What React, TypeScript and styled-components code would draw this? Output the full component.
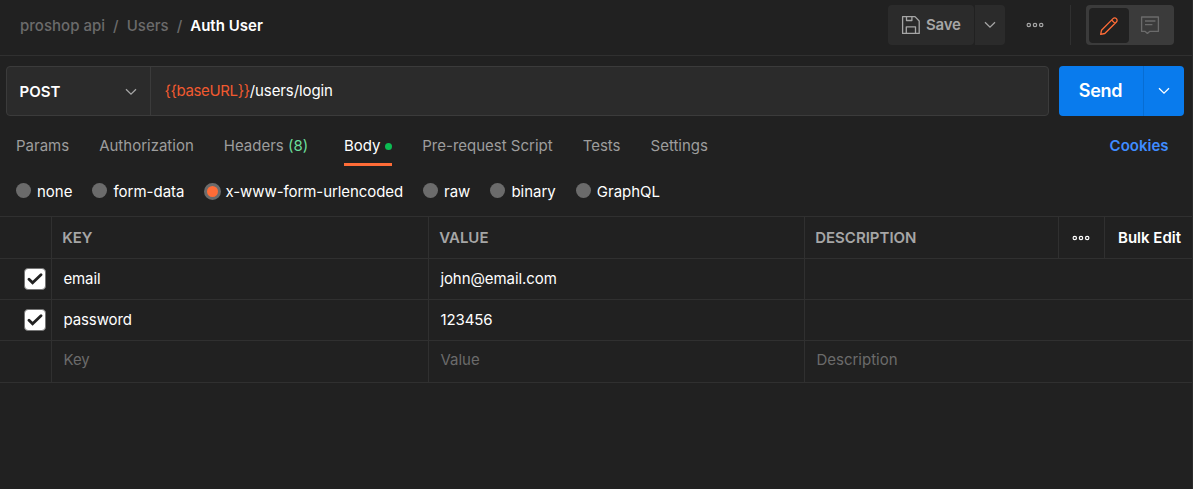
import React from "react";
import styled, { createGlobalStyle, css } from "styled-components";

const Global = createGlobalStyle`
  *, *::before, *::after { box-sizing: border-box; }
  html, body { margin: 0; background: #212121; }
  body { font: 400 15px/20px Inter, "Liberation Sans", sans-serif; color: #fff; overflow: hidden; }
  button { font: inherit; color: inherit; border: 0; padding: 0; margin: 0; background: none; }
  svg { display: block; flex: none; }
`;

const Page = styled.div`
  width: 1193px;
  height: 489px;
  border-right: 1px solid #2b2b2b;
  background: #212121;
`;

const TopBar = styled.header`
  display: flex;
  align-items: center;
  justify-content: space-between;
  height: 56px;
  padding: 0 18px 5px 20px;
  border-bottom: 1px solid #303030;
`;

const Crumbs = styled.nav`
  display: flex;
  gap: 8px;
  color: #6b6b6b;
  font-weight: 500;
  letter-spacing: 0.02px;
  padding-top: 1px;
`;

const CurrentCrumb = styled.span`
  color: #fff;
  font-weight: 600;
`;

const Actions = styled.div`
  display: flex;
  align-items: center;
  height: 40px;
`;

const SaveButton = styled.button`
  display: flex;
  align-items: center;
  gap: 5px;
  width: 86px;
  height: 40px;
  padding-left: 13px;
  border-radius: 4px;
  background: #2b2b2b;
  color: #a6a6a6;
  font-weight: 600;
  letter-spacing: -0.2px;
`;

const SaveMenuButton = styled.button`
  display: flex;
  align-items: center;
  justify-content: center;
  width: 30px;
  height: 40px;
  margin-left: 1px;
  border-radius: 0 4px 4px 0;
  background: #2b2b2b;
`;

const MoreButton = styled.button`
  display: flex;
  justify-content: center;
  width: 60px;
`;

const Divider = styled.div`
  width: 1px;
  height: 40px;
  margin: 0 15px 0 5px;
  background: #303030;
`;

const ModeSwitch = styled.div`
  display: flex;
  width: 88px;
  height: 40px;
  padding: 3px;
  border-radius: 4px;
  background: #3b3b3b;
`;

const Mode = styled.button<{ $active?: boolean }>`
  display: flex;
  align-items: center;
  justify-content: center;
  width: ${(p) => (p.$active ? 40 : 42)}px;
  height: 35px;
  padding-bottom: ${(p) => (p.$active ? 0 : 1)}px;
  border-radius: 4px;
  background: ${(p) => (p.$active ? "#212121" : "transparent")};
`;

const RequestLine = styled.div`
  display: flex;
  gap: 10px;
  height: 60px;
  padding: 10px 8px 0 6px;
`;

const UrlBox = styled.div`
  display: flex;
  width: 1043px;
  height: 50px;
  border: 1px solid #3b3b3b;
  border-radius: 4px;
  background: #2b2b2b;
`;

const MethodSelect = styled.div`
  display: flex;
  align-items: center;
  justify-content: space-between;
  width: 144px;
  padding: 2px 13px 0 12.6px;
  border-right: 1px solid #3b3b3b;
  font-weight: 600;
`;

const Url = styled.div`
  display: flex;
  align-items: center;
  padding: 0 0 0 13.4px;
  letter-spacing: -0.09px;
`;

const Variable = styled.span`
  color: #f15a30;
  letter-spacing: -0.36px;
`;

const SendGroup = styled.div`
  display: flex;
  width: 125px;
  height: 50px;
  border-radius: 4px;
  background: #097bed;
`;

const SendButton = styled.button`
  width: 85px;
  padding-right: 1px;
  border-right: 1px solid #076dd3;
  font-size: 18px;
  font-weight: 600;
  letter-spacing: -0.3px;
`;

const SendMenuButton = styled.button`
  display: flex;
  align-items: center;
  justify-content: center;
  flex: 1;
`;

const Tabs = styled.div`
  display: flex;
  gap: 30px;
  height: 50px;
  padding: 10px 23.5px 0 16px;
`;

const Tab = styled.div<{ $active?: boolean }>`
  display: flex;
  align-items: flex-start;
  height: 40px;
  padding-top: 10px;
  color: #9d9d9d;
  white-space: pre;
  ${(p) =>
    p.$active &&
    css`
      margin-left: 5.8px;
      color: #fff;
      border-bottom: 3px solid #ff6c37;
    `}
`;

const Count = styled.span`
  color: #6bdd9a;
`;

const Dot = styled.i`
  width: 7px;
  height: 7px;
  margin: 7px 0 0 4.8px;
  border-radius: 50%;
  background: #0cbb52;
`;

const Cookies = styled.a`
  margin-left: auto;
  padding-top: 10px;
  color: #3f8cff;
  font-weight: 600;
`;

const BodyTypes = styled.div`
  display: flex;
  gap: 20px;
  height: 50px;
  padding: 14px 0 0 16px;
`;

const Option = styled.label<{ $tight?: boolean }>`
  display: flex;
  align-items: center;
  gap: 6px;
  height: 22px;
  margin-left: ${(p) => (p.$tight ? -1 : 0)}px;
  letter-spacing: ${(p) => (p.$tight ? -0.08 : 0)}px;
`;

const OptionText = styled.span`
  padding-top: 2px;
`;

const Radio = styled.i<{ $on?: boolean }>`
  width: ${(p) => (p.$on ? 17 : 15)}px;
  height: ${(p) => (p.$on ? 17 : 15)}px;
  margin: ${(p) => (p.$on ? "0 -1px 0 0" : "0 0 2px")};
  border-radius: 50%;
  border: ${(p) => (p.$on ? "3px solid #6b6b6b" : "0")};
  background: ${(p) => (p.$on ? "#ff6c37" : "#6b6b6b")};
`;

const Table = styled.div`
  border-top: 1px solid #303030;
`;

const Row = styled.div<{ $height: number; $head?: boolean }>`
  display: grid;
  grid-template-columns: 52px 377px 376px ${(p) => (p.$head ? "254px 46px 1fr" : "1fr")};
  height: ${(p) => p.$height}px;
  border-bottom: 1px solid #303030;
`;

const Cell = styled.div<{ $tone?: "head" | "hint"; $last?: boolean }>`
  display: flex;
  align-items: center;
  padding-left: ${(p) => (p.$tone === "head" ? 10.2 : 11.4)}px;
  padding-bottom: ${(p) => (p.$tone === "hint" ? 3 : 0)}px;
  border-right: ${(p) => (p.$last ? "0" : "1px solid #303030")};
  color: ${(p) => (p.$tone === "head" ? "#a6a6a6" : p.$tone === "hint" ? "#6b6b6b" : "#fff")};
  font-weight: ${(p) => (p.$tone === "head" ? 600 : 400)};
  letter-spacing: ${(p) => (p.$tone ? 0 : -0.08)}px;
`;

const CheckCell = styled(Cell)`
  padding-left: 24px;
`;

const IconCell = styled(Cell)`
  justify-content: center;
  padding: 0 2px 0 0;
`;

const BulkEdit = styled.div`
  display: flex;
  align-items: center;
  justify-content: flex-end;
  padding-right: 11px;
  font-weight: 600;
`;

const CheckBox = styled.span`
  display: flex;
  align-items: center;
  justify-content: center;
  width: 22px;
  height: 22px;
  padding: 0 1px 1px 0;
  border: 1px solid #777;
  border-radius: 4px;
  background: #fff;
`;

const Chevron = ({ color }: { color: string }) => (
  <svg width="12" height="8" viewBox="0 0 12 8" fill="none" stroke={color} strokeWidth="1.3">
    <path d="M1 1.2 6 6.2 11 1.2" />
  </svg>
);

const Dots = ({ color }: { color: string }) => (
  <svg width="18" height="6" viewBox="0 0 18 6" fill="none" stroke={color} strokeWidth="1.2">
    <circle cx="2.8" cy="3" r="1.7" />
    <circle cx="9" cy="3" r="1.7" />
    <circle cx="15.2" cy="3" r="1.7" />
  </svg>
);

const SaveIcon = () => (
  <svg width="20" height="20" viewBox="0 0 20 20" fill="none" stroke="#a6a6a6" strokeWidth="1.3" strokeLinejoin="round">
    <path d="M1.6 1.6H14l4.2 4.4v12.4H1.6zM5.5 1.6v3.9h5.4V1.6M5.3 18.4v-6.6h9.2v6.6" />
  </svg>
);

const PencilIcon = () => (
  <svg width="20" height="20" viewBox="0 0 20 20" fill="none" stroke="#ff6c37" strokeWidth="1.3" strokeLinejoin="round">
    <path d="M1.7 18.3 2.5 14.2 14 2.6a2.4 2.4 0 0 1 3.4 3.4L5.8 17.5zM12.6 4l3.4 3.4" />
  </svg>
);

const CommentIcon = () => (
  <svg width="20" height="20" viewBox="0 0 20 20" fill="none" stroke="#6b6b6b" strokeWidth="1.3" strokeLinejoin="round">
    <path d="M1.6 2h16.8v14.4H9.6L7.4 18.4l-2.2-2H1.6zM5 6h10.4M5 9.6h7.4" />
  </svg>
);

const Check = () => (
  <svg width="16" height="12" viewBox="0 0 16 12" fill="none" stroke="#212121" strokeWidth="2.8" strokeLinecap="round">
    <path d="M2 6.2 5.6 9.8 14 1.8" />
  </svg>
);

const bodyTypes = ["none", "form-data", "x-www-form-urlencoded", "raw", "binary", "GraphQL"];
const selectedType = "x-www-form-urlencoded";
const params = [
  ["email", "john@email.com"],
  ["password", "123456"],
];

export default function App() {
  return (
    <Page>
      <Global />
      <TopBar>
        <Crumbs>
          <span>proshop api</span>
          <span>/</span>
          <span>Users</span>
          <span>/</span>
          <CurrentCrumb>Auth User</CurrentCrumb>
        </Crumbs>
        <Actions>
          <SaveButton>
            <SaveIcon />
            Save
          </SaveButton>
          <SaveMenuButton>
            <Chevron color="#a6a6a6" />
          </SaveMenuButton>
          <MoreButton>
            <Dots color="#a6a6a6" />
          </MoreButton>
          <Divider />
          <ModeSwitch>
            <Mode $active>
              <PencilIcon />
            </Mode>
            <Mode>
              <CommentIcon />
            </Mode>
          </ModeSwitch>
        </Actions>
      </TopBar>

      <RequestLine>
        <UrlBox>
          <MethodSelect>
            POST
            <Chevron color="#a6a6a6" />
          </MethodSelect>
          <Url>
            <Variable>{"{{baseURL}}"}</Variable>
            <span>/users/login</span>
          </Url>
        </UrlBox>
        <SendGroup>
          <SendButton>Send</SendButton>
          <SendMenuButton>
            <Chevron color="#fff" />
          </SendMenuButton>
        </SendGroup>
      </RequestLine>

      <Tabs>
        <Tab>Params</Tab>
        <Tab>Authorization</Tab>
        <Tab>
          Headers <Count>(8)</Count>
        </Tab>
        <Tab $active>
          Body
          <Dot />
        </Tab>
        <Tab>Pre-request Script</Tab>
        <Tab>Tests</Tab>
        <Tab>Settings</Tab>
        <Cookies>Cookies</Cookies>
      </Tabs>

      <BodyTypes>
        {bodyTypes.map((name) => (
          <Option key={name} $tight={name === selectedType}>
            <Radio $on={name === selectedType} />
            <OptionText>{name}</OptionText>
          </Option>
        ))}
      </BodyTypes>

      <Table>
        <Row $height={42} $head>
          <Cell />
          <Cell $tone="head">KEY</Cell>
          <Cell $tone="head">VALUE</Cell>
          <Cell $tone="head">DESCRIPTION</Cell>
          <IconCell>
            <Dots color="#fff" />
          </IconCell>
          <BulkEdit>Bulk Edit</BulkEdit>
        </Row>
        {params.map(([key, value]) => (
          <Row key={key} $height={41}>
            <CheckCell>
              <CheckBox>
                <Check />
              </CheckBox>
            </CheckCell>
            <Cell>{key}</Cell>
            <Cell>{value}</Cell>
            <Cell $last />
          </Row>
        ))}
        <Row $height={42}>
          <Cell />
          <Cell $tone="hint">Key</Cell>
          <Cell $tone="hint">Value</Cell>
          <Cell $tone="hint" $last>
            Description
          </Cell>
        </Row>
      </Table>
    </Page>
  );
}
